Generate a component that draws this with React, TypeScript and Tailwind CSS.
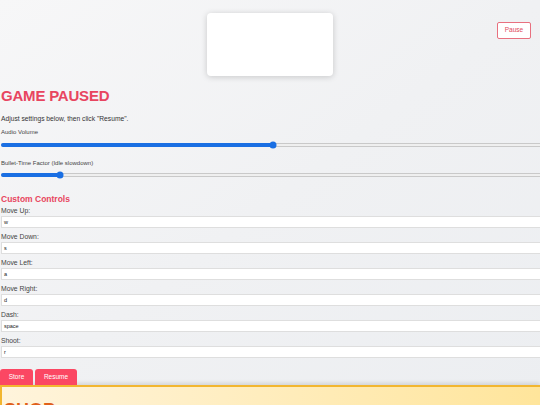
import React from "react";

const controls: [string, string][] = [
  ["Move Up:", "w"],
  ["Move Down:", "s"],
  ["Move Left:", "a"],
  ["Move Right:", "d"],
  ["Dash:", "space"],
  ["Shoot:", "r"],
];

function Slider({ pct }: { pct: number }) {
  return (
    <div className="relative ml-[1px] h-[4px] w-[560px] rounded-full border border-[#c9c9c9] bg-[#efefef]">
      <div
        className="absolute -left-[1px] -top-[1px] h-[4px] rounded-full bg-[#1a6fe3]"
        style={{ width: `${pct}%` }}
      />
      <div
        className="absolute top-1/2 h-[7px] w-[7px] -translate-x-1/2 -translate-y-1/2 rounded-full bg-[#1a6fe3]"
        style={{ left: `${pct}%` }}
      />
    </div>
  );
}

export default function App() {
  return (
    <div
      className="relative h-[405px] w-[540px] overflow-hidden bg-gradient-to-br from-[#f7f7f8] via-[#f0f1f3] to-[#eceef1] text-[#333]"
      style={{ fontFamily: '"Liberation Sans", Arial, sans-serif' }}
    >
      {/* top bar: preview card centred, pause on the right */}
      <div className="grid h-[87px] grid-cols-[1fr_126px_1fr]">
        <div />
        <div className="mt-[13px] h-[63px] w-[126px] rounded-[4px] bg-white shadow-[0_1px_6px_rgba(0,0,0,0.18)]" />
        <div className="flex justify-end pr-[9px] pt-[22px]">
          <button className="h-[17px] w-[34px] rounded-[2px] border border-[#e8707f] bg-white text-[6.5px] leading-none text-[#e04a5c]">
            Pause
          </button>
        </div>
      </div>

      <h1 className="pl-[1px] text-[15px] font-bold leading-[18px] tracking-[-0.2px] text-[#e84560]">
        GAME PAUSED
      </h1>
      <p className="mt-[9px] pl-[1px] text-[6.7px] leading-[9px] text-[#333]">
        Adjust settings below, then click "Resume".
      </p>
      <p className="mt-[5px] pl-[1px] text-[6px] leading-[8px] text-[#444]">Audio Volume</p>
      <div className="mt-[7px]">
        <Slider pct={48.6} />
      </div>
      <p className="mt-[12px] pl-[1px] text-[6px] leading-[8px] text-[#444]">
        Bullet-Time Factor (Idle slowdown)
      </p>
      <div className="mt-[6px]">
        <Slider pct={10.4} />
      </div>

      <h2 className="mt-[17px] pl-[1px] text-[8.5px] font-bold leading-[10px] text-[#e84560]">
        Custom Controls
      </h2>

      <div className="mt-[1px] flex flex-col">
        {controls.map(([label, key]) => (
          <div key={label} className="flex h-[26px] flex-col">
            <span className="h-[11px] pl-[1px] text-[6.8px] leading-[11px] text-[#444]">{label}</span>
            <div className="ml-[1px] flex h-[12px] w-[560px] items-center border border-[#dedede] bg-white pl-[2px] text-[5.5px] text-[#222]">
              {key}
            </div>
          </div>
        ))}
      </div>

      <div className="mt-[8px] flex gap-[2px]">
        <button className="h-[16px] w-[33px] rounded-t-[3px] bg-[#fb4763] text-[6.5px] text-white">Store</button>
        <button className="h-[16px] w-[42px] rounded-t-[3px] bg-[#fb4763] text-[6.5px] text-white">Resume</button>
      </div>

      <div className="h-[60px] w-[540px] border-l-2 border-t-2 border-[#f2b630] bg-gradient-to-r from-[#fff4dc] to-[#ffe59b] pl-[2px] pt-[13px] shadow-[0_-2px_4px_rgba(0,0,0,0.12)]">
        <h2 className="text-[18px] font-bold leading-[20px] text-[#e0601a]">SHOP</h2>
      </div>
    </div>
  );
}
